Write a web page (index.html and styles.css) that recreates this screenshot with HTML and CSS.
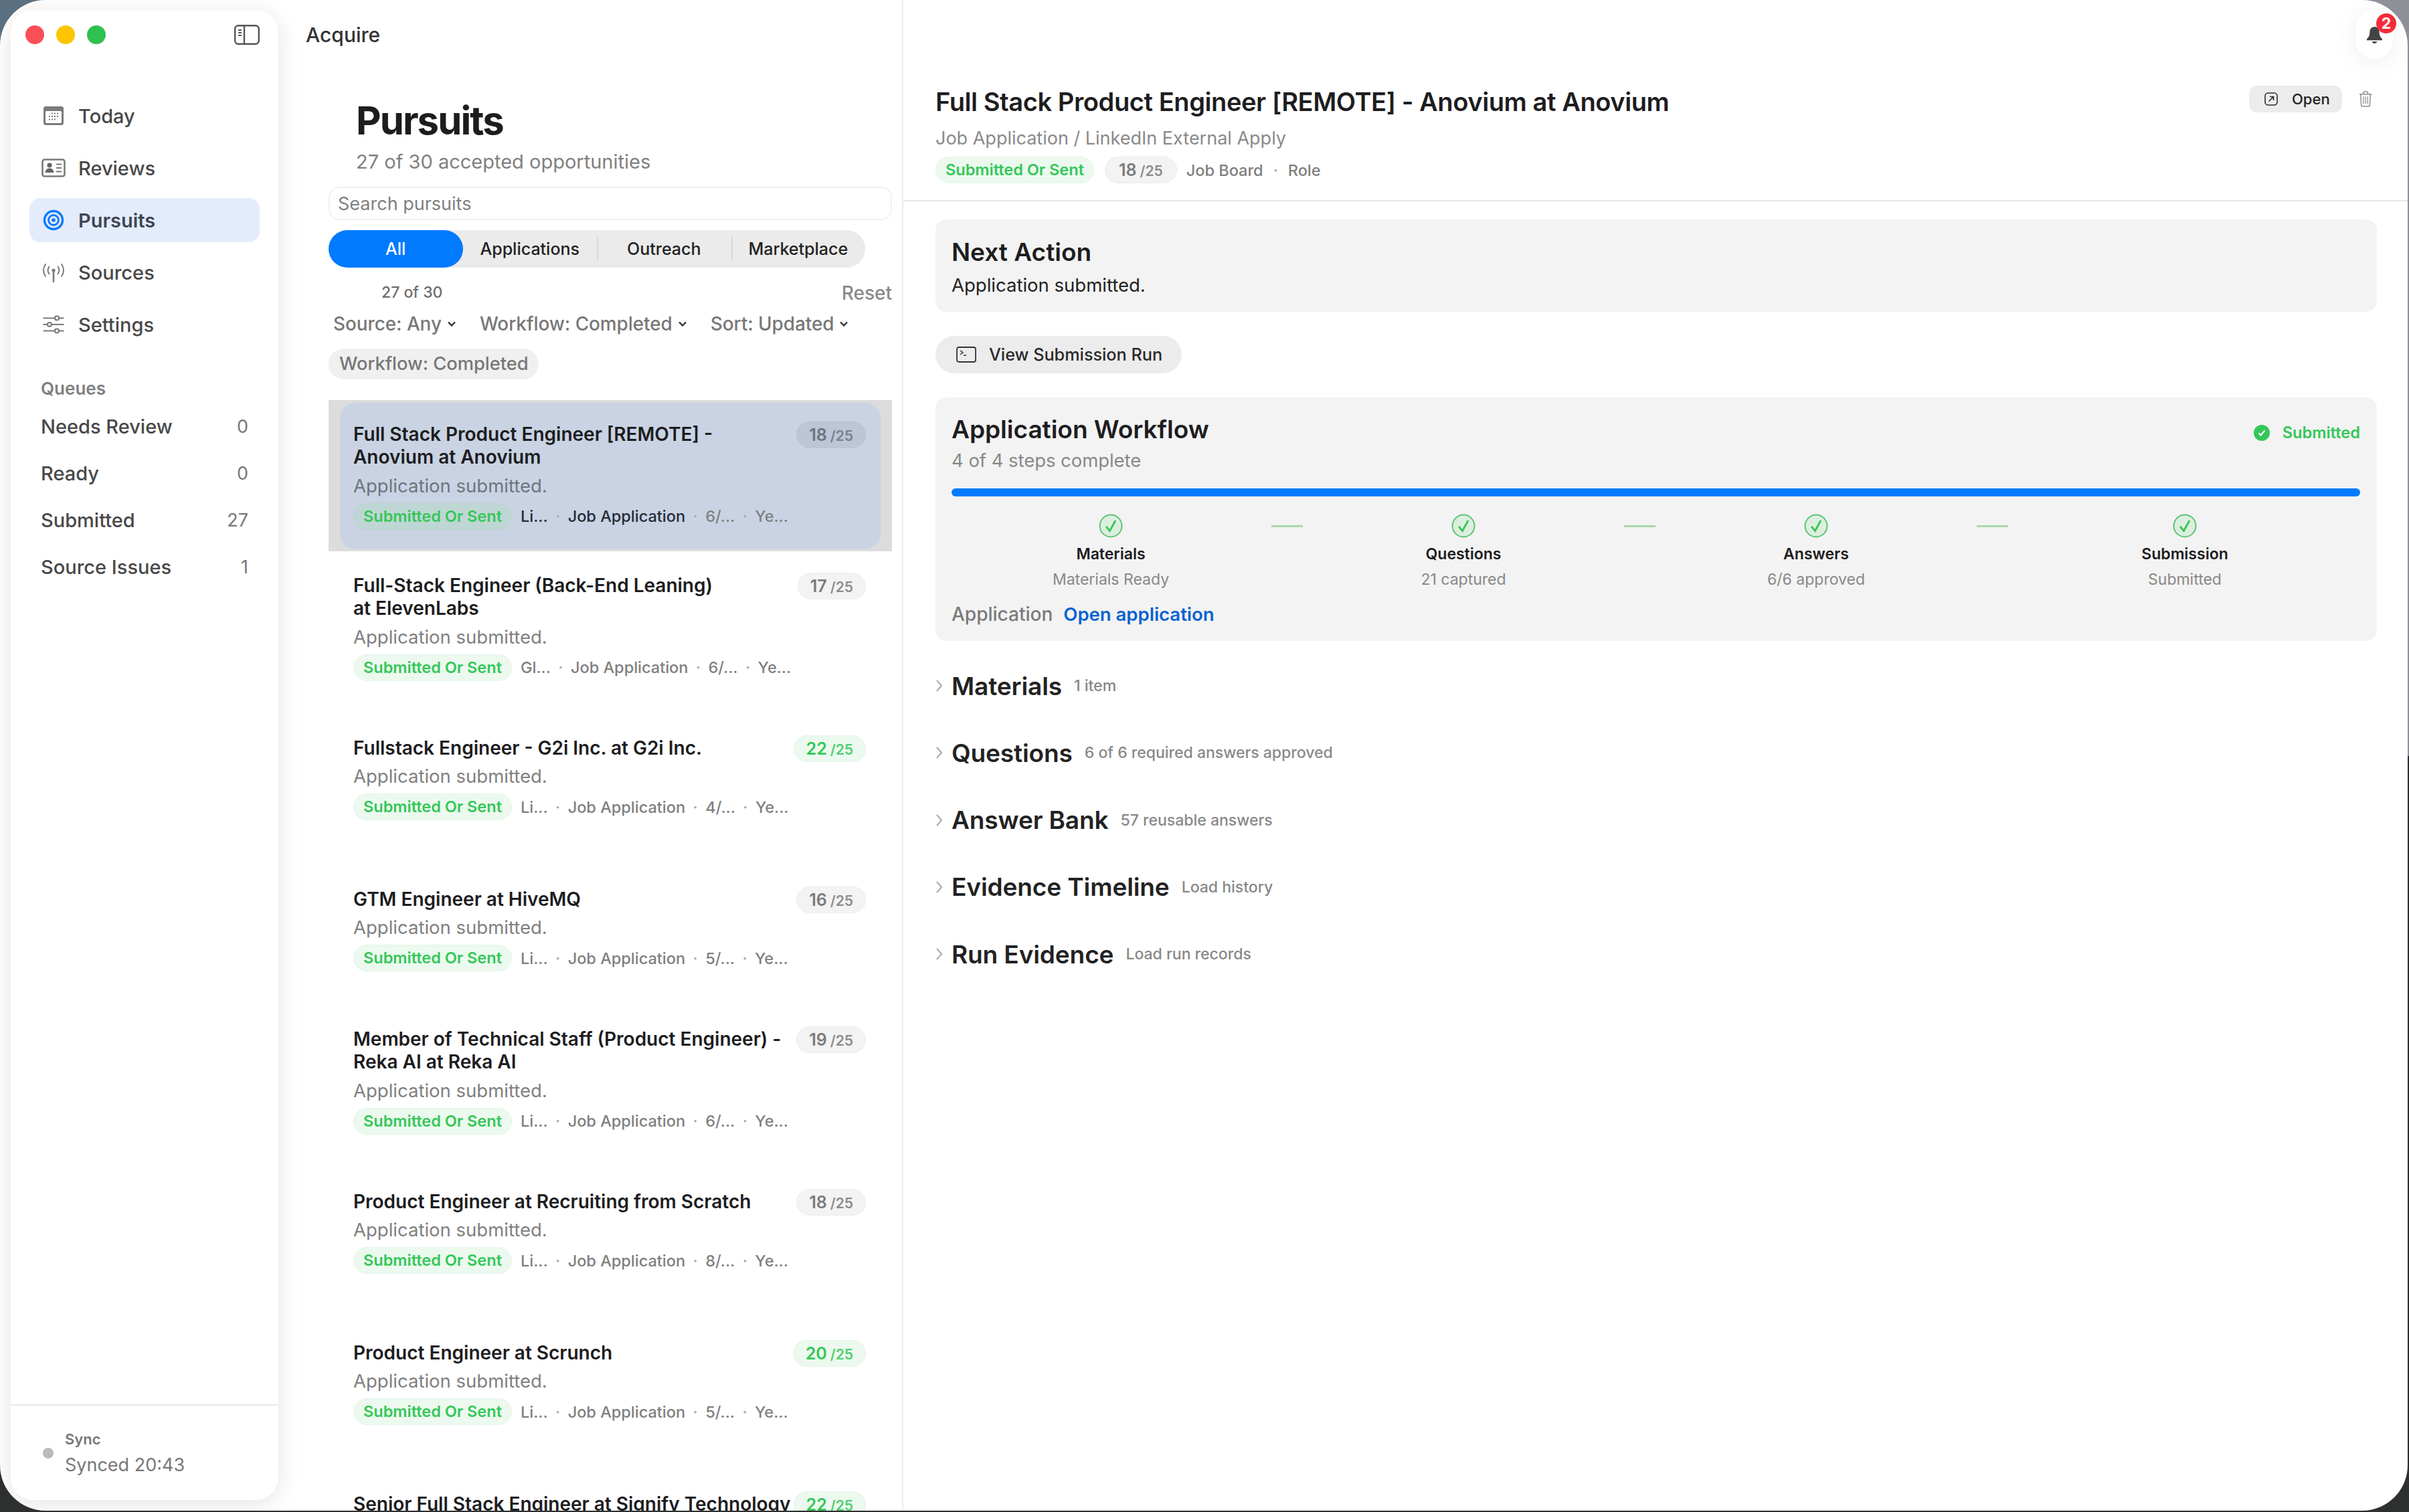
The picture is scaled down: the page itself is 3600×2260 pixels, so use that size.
FILE: index.html
```html
<!DOCTYPE html>
<html lang="en">
<head>
    <meta charset="UTF-8">
    <title>Acquire</title>
    <link rel="stylesheet" href="styles.css">
</head>
<body>
<div class="window">
    <aside class="sidebar">
        <div class="titlebar">
            <span class="light red"></span>
            <span class="light yellow"></span>
            <span class="light green"></span>
            <svg class="toggle" viewBox="0 0 38 30" fill="none" stroke="#555" stroke-width="2.4">
                <rect x="1.2" y="1.2" width="35.6" height="27.6" rx="5"/>
                <path d="M15 1.2v27.6"/>
                <path d="M6 8h5M6 12h5M6 16h5" stroke-width="2"/>
            </svg>
        </div>
        <nav class="nav">
            <a class="nav-item">
                <svg class="nav-icon" viewBox="0 0 36 36">
                    <rect x="3" y="4" width="30" height="28" rx="3.5" fill="#7b7b7b"/>
                    <rect x="6" y="11" width="24" height="18" rx="1.5" fill="#fff"/>
                    <path d="M15 14.500h2M19 14.500h2M23 14.500h2M11 19h2M15 19h2M19 19h2M23 19h2M11 23.500h2M15 23.500h2M19 23.500h2" stroke="#7b7b7b" stroke-width="2"/>
                </svg>
                Today
            </a>
            <a class="nav-item">
                <svg class="nav-icon" viewBox="0 0 36 36">
                    <rect x="1.500" y="5.500" width="33" height="25" rx="3" fill="#fff" stroke="#7b7b7b" stroke-width="2.6"/>
                    <circle cx="12" cy="14" r="3.600" fill="#666"/>
                    <path d="M5.500 25c.5-4.500 3-6.500 6.500-6.500s6 2 6.500 6.500z" fill="#666"/>
                    <path d="M22 12.500h8M22 18h8M22 23.500h8" stroke="#7b7b7b" stroke-width="2"/>
                </svg>
                Reviews
            </a>
            <a class="nav-item active">
                <svg class="nav-icon" viewBox="0 0 36 36" fill="none" stroke="#0a7aff">
                    <circle cx="18" cy="18" r="13.500" stroke-width="3.400"/>
                    <circle cx="18" cy="18" r="7.500" stroke-width="2.800"/>
                    <circle cx="18" cy="18" r="2.800" fill="#0a7aff" stroke="none"/>
                </svg>
                Pursuits
            </a>
            <a class="nav-item">
                <svg class="nav-icon" viewBox="0 0 36 36" fill="none" stroke="#7b7b7b" stroke-width="2" stroke-linecap="round">
                    <path d="M18 18v14" stroke-width="2.600"/>
                    <circle cx="18" cy="15" r="2.600" fill="#7b7b7b" stroke="none"/>
                    <path d="M11.500 9.500c-2.600 3.600-2.600 7.400 0 11M24.500 9.500c2.600 3.600 2.600 7.400 0 11"/>
                    <path d="M6 6c-4 5.500-4 12.500 0 18M30 6c4 5.500 4 12.500 0 18"/>
                </svg>
                Sources
            </a>
            <a class="nav-item">
                <svg class="nav-icon" viewBox="0 0 36 36" fill="none" stroke="#7b7b7b" stroke-width="2.200">
                    <path d="M2.500 8.500h17M26.500 8.500h7M2.500 18h6M15 18h18.500M2.500 27.500h17M26.500 27.500h7"/>
                    <circle cx="23" cy="8.500" r="3"/>
                    <circle cx="12" cy="18" r="3"/>
                    <circle cx="23" cy="27.500" r="3"/>
                </svg>
                Settings
            </a>
        </nav>
        <div class="queues">
            <div class="queues-label">Queues</div>
            <div class="queue"><span>Needs Review</span><span class="queue-count">0</span></div>
            <div class="queue"><span>Ready</span><span class="queue-count">0</span></div>
            <div class="queue"><span>Submitted</span><span class="queue-count">27</span></div>
            <div class="queue"><span>Source Issues</span><span class="queue-count">1</span></div>
        </div>
        <div class="sync">
            <span class="sync-dot"></span>
            <div>
                <div class="sync-label">Sync</div>
                <div class="sync-time">Synced 20:43</div>
            </div>
        </div>
    </aside>

    <section class="list-pane">
        <div class="app-name">Acquire</div>
        <div class="list-tools">
            <h1>Pursuits</h1>
            <p class="list-sub">27 of 30 accepted opportunities</p>
            <div class="search">Search pursuits</div>
            <div class="segments">
                <span class="segment selected">All</span>
                <span class="segment">Applications</span>
                <span class="segment sep">Outreach</span>
                <span class="segment sep">Marketplace</span>
            </div>
            <div class="counts"><span class="count">27 of 30</span><span class="reset">Reset</span></div>
            <div class="filters">
                <span class="filter">Source: Any<svg class="chev" viewBox="0 0 14 10"><path d="M2 2.500l5 5 5-5"/></svg></span>
                <span class="filter">Workflow: Completed<svg class="chev" viewBox="0 0 14 10"><path d="M2 2.500l5 5 5-5"/></svg></span>
                <span class="filter">Sort: Updated<svg class="chev" viewBox="0 0 14 10"><path d="M2 2.500l5 5 5-5"/></svg></span>
            </div>
            <div class="chip">Workflow: Completed</div>
        </div>
        <div class="rows">
            <div class="row current">
                <div class="card">
                    <div class="card-top"><div class="card-title">Full Stack Product Engineer [REMOTE] -<br>Anovium at Anovium</div><span class="score">18<small>/25</small></span></div>
                    <div class="card-sub">Application submitted.</div>
                    <div class="meta"><span class="state">Submitted Or Sent</span><span class="strong">Li...</span><i>·</i><span class="strong">Job Application</span><i>·</i><span>6/...</span><i>·</i><span>Ye...</span></div>
                </div>
            </div>
            <div class="row">
                <div class="card">
                    <div class="card-top"><div class="card-title">Full-Stack Engineer (Back-End Leaning)<br>at ElevenLabs</div><span class="score">17<small>/25</small></span></div>
                    <div class="card-sub">Application submitted.</div>
                    <div class="meta"><span class="state">Submitted Or Sent</span><span>Gl...</span><i>·</i><span>Job Application</span><i>·</i><span>6/...</span><i>·</i><span>Ye...</span></div>
                </div>
            </div>
            <div class="row">
                <div class="card">
                    <div class="card-top"><div class="card-title">Fullstack Engineer - G2i Inc. at G2i Inc.</div><span class="score good">22<small>/25</small></span></div>
                    <div class="card-sub">Application submitted.</div>
                    <div class="meta"><span class="state">Submitted Or Sent</span><span>Li...</span><i>·</i><span>Job Application</span><i>·</i><span>4/...</span><i>·</i><span>Ye...</span></div>
                </div>
            </div>
            <div class="row">
                <div class="card">
                    <div class="card-top"><div class="card-title">GTM Engineer at HiveMQ</div><span class="score">16<small>/25</small></span></div>
                    <div class="card-sub">Application submitted.</div>
                    <div class="meta"><span class="state">Submitted Or Sent</span><span>Li...</span><i>·</i><span>Job Application</span><i>·</i><span>5/...</span><i>·</i><span>Ye...</span></div>
                </div>
            </div>
            <div class="row">
                <div class="card">
                    <div class="card-top"><div class="card-title">Member of Technical Staff (Product Engineer) -<br>Reka AI at Reka AI</div><span class="score">19<small>/25</small></span></div>
                    <div class="card-sub">Application submitted.</div>
                    <div class="meta"><span class="state">Submitted Or Sent</span><span>Li...</span><i>·</i><span>Job Application</span><i>·</i><span>6/...</span><i>·</i><span>Ye...</span></div>
                </div>
            </div>
            <div class="row">
                <div class="card">
                    <div class="card-top"><div class="card-title">Product Engineer at Recruiting from Scratch</div><span class="score">18<small>/25</small></span></div>
                    <div class="card-sub">Application submitted.</div>
                    <div class="meta"><span class="state">Submitted Or Sent</span><span>Li...</span><i>·</i><span>Job Application</span><i>·</i><span>8/...</span><i>·</i><span>Ye...</span></div>
                </div>
            </div>
            <div class="row">
                <div class="card">
                    <div class="card-top"><div class="card-title">Product Engineer at Scrunch</div><span class="score good">20<small>/25</small></span></div>
                    <div class="card-sub">Application submitted.</div>
                    <div class="meta"><span class="state">Submitted Or Sent</span><span>Li...</span><i>·</i><span>Job Application</span><i>·</i><span>5/...</span><i>·</i><span>Ye...</span></div>
                </div>
            </div>
            <div class="row">
                <div class="card">
                    <div class="card-top"><div class="card-title">Senior Full Stack Engineer at Signify Technology</div><span class="score good">22<small>/25</small></span></div>
                    <div class="card-sub">Application submitted.</div>
                    <div class="meta"><span class="state">Submitted Or Sent</span><span>Li...</span><i>·</i><span>Job Application</span><i>·</i><span>5/...</span><i>·</i><span>Ye...</span></div>
                </div>
            </div>
        </div>
    </section>

    <main class="detail">
        <header class="detail-head">
            <div>
                <h2 class="detail-title">Full Stack Product Engineer [REMOTE] - Anovium at Anovium</h2>
                <p class="detail-sub">Job Application / LinkedIn External Apply</p>
                <div class="meta detail-meta"><span class="state">Submitted Or Sent</span><span class="score">18<small>/25</small></span><span>Job Board</span><i>·</i><span>Role</span></div>
            </div>
            <div class="actions">
                <span class="open-btn">
                    <svg class="open-icon" viewBox="0 0 20 20" fill="none" stroke="#2a2a2a" stroke-width="1.600">
                        <rect x="1" y="1" width="18" height="18" rx="4.500"/>
                        <path d="M6.500 13.500l7-7M8 6.500h5.500V12"/>
                    </svg>
                    Open
                </span>
                <svg class="trash" viewBox="0 0 22 26" fill="none" stroke="#8e8e93" stroke-width="1.700">
                    <path d="M1 5h20M7.500 5V2.500a1.500 1.500 0 0 1 1.500-1.500h4a1.500 1.500 0 0 1 1.500 1.500V5"/>
                    <path d="M3 5l1 18a2 2 0 0 0 2 2h10a2 2 0 0 0 2-2l1-18"/>
                    <path d="M7.500 9v12M11 9v12M14.500 9v12" stroke-width="1.400"/>
                </svg>
            </div>
        </header>
        <div class="detail-body">
            <section class="panel next-action">
                <h3>Next Action</h3>
                <p>Application submitted.</p>
            </section>
            <span class="run-btn">
                <svg class="run-icon" viewBox="0 0 30 24" fill="none" stroke="#333" stroke-width="1.800">
                    <rect x="1" y="1" width="28" height="22" rx="3"/>
                    <path d="M6 6l4 3-4 3M11 13h4" stroke-width="1.500"/>
                </svg>
                View Submission Run
            </span>
            <section class="panel workflow">
                <div class="workflow-head">
                    <div>
                        <h3>Application Workflow</h3>
                        <p class="workflow-sub">4 of 4 steps complete</p>
                    </div>
                    <span class="status">
                        <svg class="status-icon" viewBox="0 0 24 24"><circle cx="12" cy="12" r="12" fill="#34c759"/><path d="M7.500 12.500l3 3 6-7" fill="none" stroke="#fff" stroke-width="2"/></svg>
                        Submitted
                    </span>
                </div>
                <div class="bar"></div>
                <div class="steps">
                    <div class="step">
                        <svg class="step-icon" viewBox="0 0 36 36"><circle cx="18" cy="18" r="16.500" fill="#dcefdf" stroke="#5cc474" stroke-width="2"/><path d="M11 19l5.500 6.500L25 10" fill="none" stroke="#34c759" stroke-width="2.800"/></svg>
                        <div class="step-name">Materials</div>
                        <div class="step-note">Materials Ready</div>
                    </div>
                    <span class="link-line"></span>
                    <div class="step">
                        <svg class="step-icon" viewBox="0 0 36 36"><circle cx="18" cy="18" r="16.500" fill="#dcefdf" stroke="#5cc474" stroke-width="2"/><path d="M11 19l5.500 6.500L25 10" fill="none" stroke="#34c759" stroke-width="2.800"/></svg>
                        <div class="step-name">Questions</div>
                        <div class="step-note">21 captured</div>
                    </div>
                    <span class="link-line"></span>
                    <div class="step">
                        <svg class="step-icon" viewBox="0 0 36 36"><circle cx="18" cy="18" r="16.500" fill="#dcefdf" stroke="#5cc474" stroke-width="2"/><path d="M11 19l5.500 6.500L25 10" fill="none" stroke="#34c759" stroke-width="2.800"/></svg>
                        <div class="step-name">Answers</div>
                        <div class="step-note">6/6 approved</div>
                    </div>
                    <span class="link-line"></span>
                    <div class="step">
                        <svg class="step-icon" viewBox="0 0 36 36"><circle cx="18" cy="18" r="16.500" fill="#dcefdf" stroke="#5cc474" stroke-width="2"/><path d="M11 19l5.500 6.500L25 10" fill="none" stroke="#34c759" stroke-width="2.800"/></svg>
                        <div class="step-name">Submission</div>
                        <div class="step-note">Submitted</div>
                    </div>
                </div>
                <div class="app-link"><span>Application</span><a>Open application</a></div>
            </section>
            <div class="sections">
                <div class="section-row"><svg class="section-chev" viewBox="0 0 12 20"><path d="M2 2l7 8-7 8"/></svg><h3>Materials</h3><span>1 item</span></div>
                <div class="section-row"><svg class="section-chev" viewBox="0 0 12 20"><path d="M2 2l7 8-7 8"/></svg><h3>Questions</h3><span>6 of 6 required answers approved</span></div>
                <div class="section-row"><svg class="section-chev" viewBox="0 0 12 20"><path d="M2 2l7 8-7 8"/></svg><h3>Answer Bank</h3><span>57 reusable answers</span></div>
                <div class="section-row"><svg class="section-chev" viewBox="0 0 12 20"><path d="M2 2l7 8-7 8"/></svg><h3>Evidence Timeline</h3><span>Load history</span></div>
                <div class="section-row"><svg class="section-chev" viewBox="0 0 12 20"><path d="M2 2l7 8-7 8"/></svg><h3>Run Evidence</h3><span>Load run records</span></div>
            </div>
        </div>
    </main>

    <div class="bell">
        <svg class="bell-icon" viewBox="0 0 26 30" fill="#444">
            <path d="M13 2c-5 0-7.500 4-7.500 9 0 4.500-1.500 7-4.500 10v2h24v-2c-3-3-4.500-5.500-4.500-10 0-5-2.500-9-7.500-9z"/>
            <path d="M9 25h8c-.6 2-2.200 3-4 3s-3.400-1-4-3z"/>
        </svg>
        <span class="bell-badge">2</span>
    </div>
</div>
</body>
</html>
```
FILE: styles.css
```css
* {
    box-sizing: border-box;
}
html, body {
    height: 100%;
}
body {
    margin: 0;
    overflow: hidden;
    font-family: Inter, "Liberation Sans", sans-serif;
    color: #1d1d1f;
    background: linear-gradient(90deg, #5a6f80, #8f9097) top / 100% 50% no-repeat, #2d302e;
}
h1, h2, h3, p {
    margin: 0;
}

/* window */
.window {
    position: relative;
    display: flex;
    width: 3598px;
    height: 2258px;
    background: #fff;
    border-radius: 68px;
    overflow: hidden;
}

/* sidebar */
.sidebar {
    display: flex;
    flex-direction: column;
    flex: none;
    width: 400px;
    margin: 15px 0 16px 16px;
    background: #fff;
    border-radius: 34px;
    box-shadow: 0 6px 36px rgba(0, 0, 0, 0.11);
}
.titlebar {
    display: flex;
    align-items: center;
    height: 74px;
    padding: 0 28px 0 22px;
}
.light {
    width: 28px;
    height: 28px;
    margin-right: 18px;
    border-radius: 50%;
}
.red { background: #fb4f57; }
.yellow { background: #fdc500; }
.green { background: #2fc04f; }
.toggle {
    width: 38px;
    height: 30px;
    margin-left: auto;
}
.nav {
    display: flex;
    flex-direction: column;
    gap: 12px;
    margin: 51px 28px 0;
}
.nav-item {
    display: flex;
    align-items: center;
    gap: 19px;
    height: 66px;
    padding-left: 18px;
    border-radius: 16px;
    font-size: 29px;
    font-weight: 500;
    color: #484848;
}
.nav-item.active {
    background: #e4ecfb;
    color: #3f4652;
    font-weight: 600;
}
.nav-icon {
    flex: none;
    width: 36px;
    height: 36px;
}
.queues {
    margin: 48px 45px 0;
}
.queues-label {
    height: 36px;
    line-height: 30px;
    font-size: 26px;
    font-weight: 600;
    color: #808080;
}
.queue {
    display: flex;
    justify-content: space-between;
    align-items: center;
    height: 70px;
    font-size: 29px;
    font-weight: 500;
    color: #484848;
}
.queue-count {
    font-size: 27px;
    font-weight: 400;
    color: #777;
}
.sync {
    display: flex;
    align-items: center;
    gap: 17px;
    height: 143px;
    margin-top: auto;
    padding-left: 48px;
    border-top: 2px solid #e9e9e9;
}
.sync-dot {
    width: 16px;
    height: 16px;
    border-radius: 50%;
    background: #bbb;
}
.sync-label {
    line-height: 30px;
    font-size: 22px;
    font-weight: 600;
    color: #777;
}
.sync-time {
    margin-top: 6px;
    line-height: 36px;
    font-size: 27px;
    color: #777;
}

/* list column */
.list-pane {
    flex: none;
    width: 934px;
    height: 100%;
    padding-top: 32px;
    border-right: 2px solid #ececec;
    overflow: hidden;
}
.app-name {
    padding-left: 41px;
    line-height: 40px;
    font-size: 30px;
    font-weight: 500;
    color: #333;
}
.list-tools {
    margin: 73px 15px 0 75px;
}
h1 {
    padding-left: 41px;
    line-height: 70px;
    font-size: 58px;
    font-weight: 700;
    letter-spacing: -1.9px;
}
.list-sub {
    margin-top: 7px;
    padding-left: 41px;
    line-height: 40px;
    font-size: 29px;
    color: #808080;
}
.search {
    height: 50px;
    margin-top: 17px;
    padding-left: 12px;
    line-height: 48px;
    border: 2px solid #f1f1f1;
    border-radius: 16px;
    font-size: 27px;
    color: #808080;
}
.segments {
    display: flex;
    width: 802px;
    height: 56px;
    margin-top: 15px;
    background: #ebebeb;
    border-radius: 28px;
}
.segment {
    position: relative;
    flex: 1;
    line-height: 57px;
    text-align: center;
    font-size: 25px;
    font-weight: 500;
    color: #222;
}
.segment.selected {
    background: #007aff;
    border-radius: 28px;
    color: #fff;
}
.segment.sep::before {
    content: "";
    position: absolute;
    left: 0;
    top: 10px;
    bottom: 10px;
    width: 2px;
    background: #d8d8d8;
}
.counts {
    display: flex;
    justify-content: space-between;
    align-items: center;
    height: 34px;
    margin-top: 20px;
    padding-left: 79px;
}
.count {
    font-size: 23px;
    font-weight: 500;
    color: #6f6f6f;
}
.reset {
    margin-top: 2px;
    font-size: 28px;
    font-weight: 500;
    color: #8a8a8a;
}
.filters {
    display: flex;
    height: 36px;
    margin-top: 12px;
    padding-left: 7px;
    font-size: 27.800px;
    font-weight: 500;
    color: #777;
    line-height: 36px;
}
.filter {
    display: flex;
    align-items: center;
    gap: 8px;
    margin-right: 35px;
}
.chev {
    width: 14px;
    height: 10px;
    fill: none;
    stroke: #333;
    stroke-width: 2.4;
}
.chip {
    display: inline-block;
    height: 46px;
    margin-top: 19px;
    padding: 0 15px 0 16px;
    line-height: 46px;
    border-radius: 23px;
    background: #f0f0f0;
    font-size: 27.300px;
    font-weight: 500;
    color: #777;
}

/* list rows */
.rows {
    margin: 31px 15px 0 75px;
}
.row {
    height: 226px;
    padding: 4px 17px 3px;
}
.row.current {
    background: #dcdcdc;
}
.card {
    display: flex;
    flex-direction: column;
    justify-content: center;
    height: 100%;
    padding: 0 22px 0 20px;
    border-radius: 24px;
}
.current .card {
    background: #c9d3e3;
}
.card-top {
    display: flex;
    justify-content: space-between;
    align-items: flex-start;
}
.card-title {
    white-space: nowrap;
    line-height: 34.5px;
    font-size: 28px;
    font-weight: 600;
    color: #1d1d1f;
}
.score {
    flex: none;
    height: 40px;
    margin-top: -2px;
    margin-bottom: -4px;
    padding: 0 18px;
    line-height: 38px;
    border: 1px solid #ededed;
    border-radius: 20px;
    background: #f3f3f3;
    font-size: 25px;
    font-weight: 600;
    color: #7b7b7b;
}
.score small {
    margin-left: 5px;
    font-size: 21px;
    font-weight: 600;
    opacity: 0.85;
}
.score.good {
    border-color: #e6f5e9;
    background: #ecf9ee;
    color: #34c759;
}
.current .score {
    border-color: #b9c3d3;
    background: #bcc6d6;
    color: #6d7480;
}
.card-sub {
    margin-top: 8px;
    line-height: 34px;
    font-size: 27.500px;
    color: #808080;
}
.current .card-sub {
    color: #6f747d;
}
.meta {
    display: flex;
    align-items: center;
    height: 40px;
    margin-top: 9px;
    font-size: 23.500px;
    font-weight: 500;
    color: #7f7f7f;
}
.meta i {
    margin: 0 11.500px;
    font-style: normal;
    color: #aaa;
}
.state {
    height: 40px;
    margin-right: 13px;
    padding: 0 14px;
    line-height: 38px;
    border: 1px solid #e6f5e9;
    border-radius: 20px;
    background: #ecf9ee;
    font-weight: 600;
    color: #34c759;
}
.current .state {
    border-color: #bcd3d0;
    background: #bfd7d4;
}
.strong {
    color: #262b36;
}

/* detail */
.detail {
    flex: 1;
    min-width: 0;
}
.detail-head {
    display: flex;
    justify-content: space-between;
    align-items: flex-start;
    height: 301px;
    padding: 127px 53px 0 48px;
    border-bottom: 2px solid #e6e6e6;
}
.detail-title {
    line-height: 50px;
    font-size: 38px;
    font-weight: 600;
    letter-spacing: -0.4px;
}
.detail-sub {
    margin-top: 12px;
    line-height: 36px;
    font-size: 27px;
    color: #8a8a8a;
}
.detail-meta {
    margin-top: 9px;
}
.detail-meta .state {
    margin-right: 16px;
}
.detail-meta .score {
    margin: 0 14px 0 0;
    padding: 0 20px;
}
.detail-meta i {
    margin: 0 15px;
}
.actions {
    display: flex;
    align-items: center;
    gap: 25px;
    margin-top: 1px;
}
.open-btn {
    display: flex;
    align-items: center;
    gap: 21px;
    width: 139px;
    height: 40px;
    padding-left: 23px;
    border-radius: 12px;
    background: #ececec;
    font-size: 22px;
    font-weight: 500;
    color: #222;
}
.open-icon {
    width: 20px;
    height: 20px;
}
.trash {
    width: 20px;
    height: 24px;
}
.detail-body {
    padding: 27px 46px 0 48px;
}
.panel {
    padding: 0 25px 0 24px;
    border-radius: 16px;
    background: #f3f3f3;
}
.panel h3 {
    line-height: 50px;
    font-size: 37px;
    font-weight: 600;
}
.next-action {
    height: 138px;
    padding-top: 24px;
}
.next-action p {
    margin-top: 6px;
    line-height: 36px;
    font-size: 27.500px;
    color: #222;
}
.run-btn {
    display: inline-flex;
    align-items: center;
    gap: 19px;
    height: 56px;
    margin-top: 36px;
    padding: 0 29px 0 31px;
    border-radius: 28px;
    background: #ececec;
    font-size: 25.200px;
    font-weight: 500;
    color: #2a2a2a;
}
.run-icon {
    width: 30px;
    height: 24px;
}
.workflow {
    height: 364px;
    margin-top: 36px;
    padding-top: 23px;
}
.workflow-head {
    display: flex;
    justify-content: space-between;
    align-items: flex-start;
}
.workflow-sub {
    margin-top: 3px;
    line-height: 36px;
    font-size: 27.400px;
    color: #888;
}
.status {
    display: flex;
    align-items: center;
    gap: 19px;
    margin-top: 15px;
    font-size: 23.600px;
    font-weight: 600;
    color: #34c759;
}
.status-icon {
    width: 24px;
    height: 24px;
}
.bar {
    height: 12px;
    margin-top: 24px;
    border-radius: 6px;
    background: #007aff;
}
.steps {
    display: flex;
    align-items: flex-start;
    margin-top: 26px;
}
.step {
    width: 476px;
    text-align: center;
}
.step:last-child {
    flex: 1;
}
.step-icon {
    display: block;
    width: 36px;
    height: 36px;
    margin: 0 auto;
}
.link-line {
    flex: none;
    width: 47px;
    height: 3px;
    margin: 17px 2px 0;
    background: #a8d8ae;
}
.step-name {
    margin-top: 9px;
    line-height: 30px;
    font-size: 23px;
    font-weight: 600;
}
.step-note {
    margin-top: 8px;
    line-height: 30px;
    font-size: 23px;
    color: #888;
}
.app-link {
    display: flex;
    align-items: baseline;
    gap: 16px;
    margin-top: 19px;
    line-height: 36px;
    font-size: 28px;
    font-weight: 500;
    color: #7a7a7a;
}
.app-link a {
    font-size: 27.500px;
    font-weight: 600;
    color: #0a63d0;
}
.sections {
    margin-top: 17px;
}
.section-row {
    display: flex;
    align-items: center;
    height: 100.250px;
}
.section-chev {
    width: 12px;
    height: 20px;
    margin-right: 12px;
    fill: none;
    stroke: #a8a8a8;
    stroke-width: 2;
}
.section-row h3 {
    font-size: 37px;
    font-weight: 600;
    letter-spacing: -0.1px;
    color: #222;
}
.section-row span {
    margin-left: 18px;
    font-size: 23px;
    font-weight: 500;
    color: #888;
}

/* notification button */
.bell {
    position: absolute;
    top: 15px;
    right: 22px;
    width: 56px;
    height: 73px;
    border-radius: 28px;
    background: #fff;
    box-shadow: 0 6px 36px rgba(0, 0, 0, 0.07);
}
.bell-icon {
    position: absolute;
    left: 16px;
    top: 23px;
    width: 25px;
    height: 29px;
}
.bell-badge {
    position: absolute;
    left: 31px;
    top: 5px;
    width: 30px;
    height: 30px;
    line-height: 30px;
    border-radius: 50%;
    background: #f42c3a;
    text-align: center;
    font-size: 23px;
    font-weight: 700;
    color: #fff;
}
```
